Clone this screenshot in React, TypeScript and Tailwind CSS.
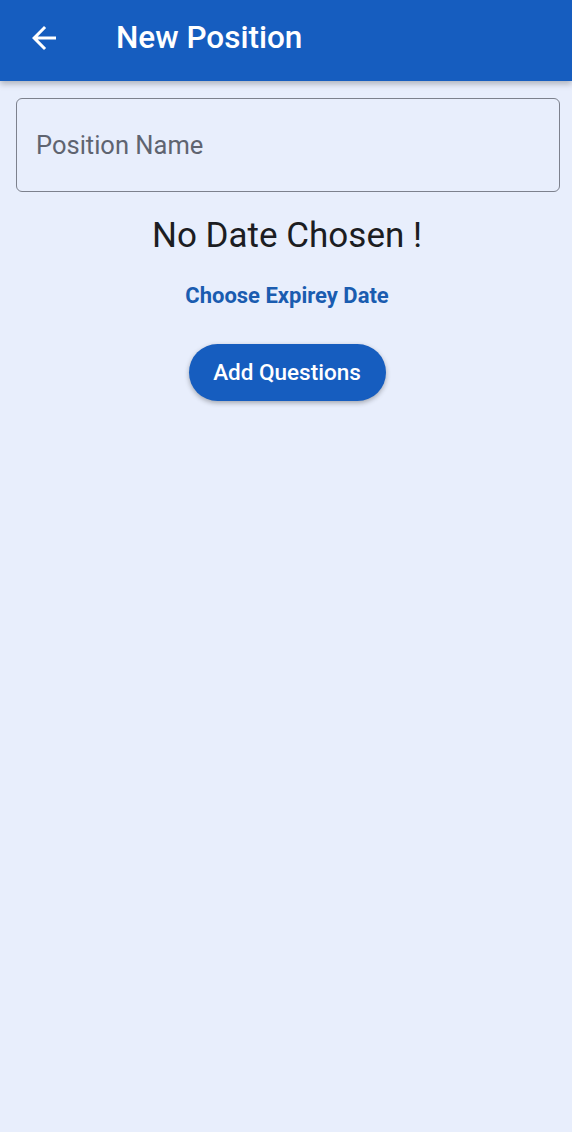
import React from 'react';

export default function App() {
  return (
    <div className="min-h-[1132px] w-full bg-[#e8eefc] font-['Roboto',sans-serif]">
      {/* App bar */}
      <header className="relative z-10 flex h-[81px] items-center bg-[#165dbf] pb-[5px] shadow-[0_3px_6px_rgba(0,0,0,0.25)]">
        <button className="ml-[25px] flex h-[38px] w-[38px] items-center justify-center text-white">
          <svg width="36" height="36" viewBox="0 0 24 24" fill="currentColor">
            <path d="M20 11H7.83l5.59-5.59L12 4l-8 8 8 8 1.41-1.41L7.83 13H20v-2z" />
          </svg>
        </button>
        <h1 className="ml-[53px] text-[31.5px] font-medium text-white">New Position</h1>
      </header>

      <div className="flex flex-col items-center pl-[2px] pt-[17px]">
        <div className="ml-[2px] flex h-[94px] w-[544px] items-center rounded-[6px] border border-[#7d818d] px-[19px]">
          <input
            placeholder="Position Name"
            className="w-full bg-transparent text-[25.5px] text-[#1c1d22] outline-none placeholder:text-[#5f6470]"
          />
        </div>

        <p className="mt-[23px] text-[35px] leading-[42px] text-[#1c1d22]">No Date Chosen !</p>

        <button className="mt-[25px] text-[22px] font-bold leading-[28px] text-[#1a5cb0]">Choose Expirey Date</button>

        <button className="mt-[34px] flex h-[57px] w-[197px] items-center justify-center rounded-full bg-[#165dbf] text-[22.5px] font-medium text-white shadow-[0_2px_5px_rgba(0,0,0,0.3)]">
          Add Questions
        </button>
      </div>
    </div>
  );
}
